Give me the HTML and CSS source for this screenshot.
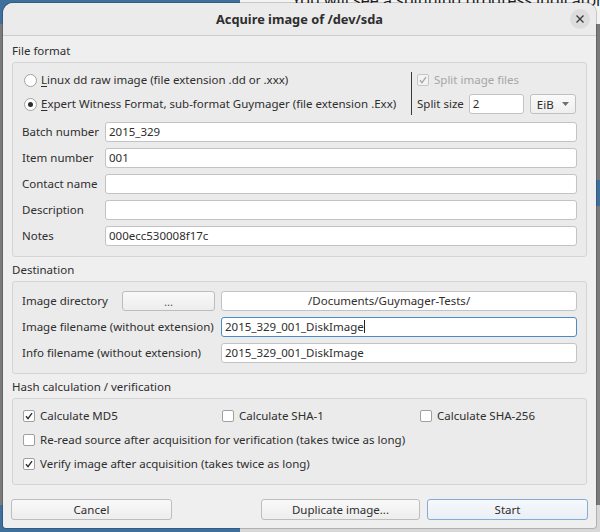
FILE: index.html
```html
<!DOCTYPE html>
<html>
<head>
<meta charset="utf-8">
<link rel="stylesheet" href="styles.css">
</head>
<body>
<div class="desktop">
  <div class="bg-top-left"></div>
  <div class="bg-top-right"><span>You will see a spinning progress indicator appe</span></div>
  <div class="bg-bottom-left"></div>
  <div class="bg-bottom-right"></div>
  <div class="bg-right-hl"></div>

  <div class="dialog">
    <div class="titlebar">
      <span class="title">Acquire image of /dev/sda</span>
      <span class="close"><svg width="10" height="10" viewBox="0 0 10 10"><path d="M1.5 1.5 L8.5 8.5 M8.5 1.5 L1.5 8.5" stroke="#3a3a3a" stroke-width="1.3"/></svg></span>
    </div>
    <div class="dlg-body">
      <div class="section-label first">File format</div>
      <div class="group g-format">
        <div class="format-top">
          <div class="radios">
            <div class="radio-row"><span class="radio"></span><span class="lbl"><u>L</u>inux dd raw image (file extension .dd or .xxx)</span></div>
            <div class="radio-row"><span class="radio checked"></span><span class="lbl"><u>E</u>xpert Witness Format, sub-format Guymager (file extension .Exx)</span></div>
          </div>
          <div class="vsep"></div>
          <div class="split">
            <div class="check-row disabled"><span class="check on"><svg width="10" height="10" viewBox="0 0 10 10"><path d="M2 5.2 L4 7.6 L8 2.2" fill="none" stroke="#a8a8a8" stroke-width="1.4"/></svg></span><span class="lbl">Split image files</span></div>
            <div class="split-size"><span class="lbl">Split size</span><span class="field small">2</span><span class="combo"><span>EiB</span><svg width="7" height="4" viewBox="0 0 7 4"><path d="M0 0 L7 0 L3.5 4 Z" fill="#707070"/></svg></span></div>
          </div>
        </div>
        <div class="form-grid">
          <span class="lbl">Batch number</span><span class="field">2015_329</span>
          <span class="lbl">Item number</span><span class="field">001</span>
          <span class="lbl">Contact name</span><span class="field"></span>
          <span class="lbl">Description</span><span class="field"></span>
          <span class="lbl">Notes</span><span class="field">000ecc530008f17c</span>
        </div>
      </div>

      <div class="section-label">Destination</div>
      <div class="group g-dest">
        <div class="dest-grid">
          <div class="dir-cell"><span class="lbl dir-lbl">Image directory</span><span class="btn small-btn">...</span></div>
          <span class="field dir-field">/Documents/Guymager-Tests/</span>
          <span class="lbl">Image filename (without extension)</span>
          <span class="field focused">2015_329_001_DiskImage<span class="caret"></span></span>
          <span class="lbl">Info filename (without extension)</span>
          <span class="field">2015_329_001_DiskImage</span>
        </div>
      </div>

      <div class="section-label">Hash calculation / verification</div>
      <div class="group g-hash">
        <div class="hash-row three">
          <div class="check-row"><span class="check on"><svg width="10" height="10" viewBox="0 0 10 10"><path d="M2 5.2 L4 7.6 L8 2.2" fill="none" stroke="#2e2e2e" stroke-width="1.4"/></svg></span><span class="lbl">Calculate MD5</span></div>
          <div class="check-row"><span class="check"></span><span class="lbl">Calculate SHA-1</span></div>
          <div class="check-row"><span class="check"></span><span class="lbl">Calculate SHA-256</span></div>
        </div>
        <div class="hash-row">
          <div class="check-row"><span class="check"></span><span class="lbl">Re-read source after acquisition for verification (takes twice as long)</span></div>
        </div>
        <div class="hash-row">
          <div class="check-row"><span class="check on"><svg width="10" height="10" viewBox="0 0 10 10"><path d="M2 5.2 L4 7.6 L8 2.2" fill="none" stroke="#2e2e2e" stroke-width="1.4"/></svg></span><span class="lbl">Verify image after acquisition (takes twice as long)</span></div>
        </div>
      </div>

      <div class="buttons">
        <span class="btn cancel">Cancel</span>
        <span class="spacer"></span>
        <span class="btn dup">Duplicate image...</span>
        <span class="btn start">Start</span>
      </div>
    </div>
  </div>
</div>
</body>
</html>
```

FILE: styles.css
```css
* { box-sizing: border-box; }
html, body { margin: 0; padding: 0; }
body {
  width: 600px;
  height: 532px;
  overflow: hidden;
  background: #7a7a7a;
  font-family: "Noto Sans", "DejaVu Sans", sans-serif;
  font-size: 11.5px;
  color: #2e2e2e;
}
.desktop { position: relative; width: 600px; height: 532px; }

.bg-top-left { position: absolute; left: 0; top: 0; width: 240px; height: 24px; background: #3f6f9d; }
.bg-top-right { position: absolute; left: 240px; right: 0; top: 0; height: 24px; background: #f3f3f3; overflow: hidden; }
.bg-top-right span { position: absolute; left: 52px; top: -11px; font-size: 16px; color: #1e1e1e; white-space: nowrap; }
.bg-bottom-left { position: absolute; left: 0; top: 505px; width: 240px; height: 27px; background: #3f6f9d; }
.bg-bottom-right { position: absolute; left: 240px; right: 0; top: 505px; height: 27px; background: #d8d8d8; }
.bg-right-hl { position: absolute; left: 594px; width: 6px; top: 180px; height: 26px; background: #3f6f9d; }

.dialog {
  position: absolute;
  left: 3px;
  top: 3px;
  width: 593px;
  height: 525px;
  background: #efefef;
  border-radius: 10px 10px 3px 3px;
  box-shadow: 0 0 0 1px rgba(0,0,0,0.18);
  display: flex;
  flex-direction: column;
}
.titlebar {
  height: 33px;
  border-bottom: 1px solid #cdcdcd;
  display: flex;
  align-items: center;
  justify-content: center;
  position: relative;
  background: #ebebeb;
  border-radius: 10px 10px 0 0;
}
.title { font-weight: bold; font-size: 12.8px; color: #2e2e2e; }
.close {
  position: absolute;
  right: 6px;
  top: 6px;
  width: 20px;
  height: 20px;
  border-radius: 50%;
  background: #dcdcdc;
  display: flex;
  align-items: center;
  justify-content: center;
}

.dlg-body { padding: 0 9px 8px 9px; display: flex; flex-direction: column; flex: 1; }
.section-label { height: 16px; line-height: 16px; margin: 5px 0 3px 0; padding-left: 0; }
.section-label.first { margin-top: 7px; }

.group {
  background: #ebebeb;
  border: 1px solid #d4d4d4;
  border-radius: 3px;
  padding: 0 9px 0 9px;
}
.g-format { padding-top: 5px; padding-bottom: 10px; }
.g-dest { padding-top: 9px; padding-bottom: 10px; }
.g-hash { padding-top: 5px; padding-bottom: 8px; }

.lbl { white-space: nowrap; line-height: 20px; }

.format-top { display: flex; height: 48px; }
.radios { width: 389px; display: flex; flex-direction: column; }
.radio-row { height: 24px; display: flex; align-items: center; padding-left: 2px; }
.radio {
  width: 13px; height: 13px; border-radius: 50%;
  border: 1px solid #a3a3a3; background: #fff;
  margin-right: 4px; position: relative; flex: none;
}
.radio.checked::after {
  content: ""; position: absolute; left: 3px; top: 3px;
  width: 5px; height: 5px; border-radius: 50%; background: #2e2e2e;
}
u { text-decoration-thickness: 1px; text-underline-offset: 2px; }

.vsep { width: 1px; background: #3a3a3a; margin-top: 4px; height: 43px; }
.split { margin-left: 5px; display: flex; flex-direction: column; }
.check-row { height: 24px; display: flex; align-items: center; }
.check {
  width: 12px; height: 12px; border: 1px solid #a0a0a0; background: #fff;
  border-radius: 2px; margin-right: 5px; flex: none;
  display: flex; align-items: center; justify-content: center;
}
.check-row.disabled .check { border-color: #c6c6c6; background: #f3f3f3; }
.check-row.disabled .lbl { color: #a6a6a6; }
.split-size { height: 24px; display: flex; align-items: center; }
.split-size .lbl { margin-right: 5px; }

.field {
  height: 20px;
  background: #fff;
  border: 1px solid #c3c3c3;
  border-radius: 3px;
  line-height: 18px;
  padding-left: 3px;
  white-space: nowrap;
  overflow: hidden;
  display: block;
}
.field.small { width: 55px; }
.field.focused { border-color: #4a8bc9; }
.caret { display: inline-block; width: 1px; height: 13px; background: #222; vertical-align: -2px; }
.combo {
  width: 46px; height: 20px; margin-left: 6px;
  border: 1px solid #c0c0c0; border-radius: 3px;
  background: linear-gradient(#fafafa, #efefef);
  display: flex; align-items: center; justify-content: space-between;
  padding: 0 6px 0 6px;
}

.form-grid {
  margin-top: 6px;
  display: grid;
  grid-template-columns: 83px 1fr;
  row-gap: 6px;
}

.dest-grid {
  display: grid;
  grid-template-columns: 199px 1fr;
  row-gap: 6px;
}
.dir-cell { display: flex; }
.dir-lbl { width: 100px; }
.btn {
  height: 20px;
  border: 1px solid #bdbdbd;
  border-radius: 3px;
  background: linear-gradient(#f9f9f9, #ededed);
  display: flex; align-items: center; justify-content: center;
  white-space: nowrap;
}
.small-btn { width: 93px; color: #555; }
.dir-field { padding-left: 86px; }

.hash-row { height: 24px; display: flex; }
.hash-row .check-row { padding-left: 1px; }
.hash-row.three { display: grid; grid-template-columns: 199px 198px 1fr; }

.buttons { margin-top: auto; display: flex; height: 21px; margin-left: -1px; margin-right: -1px; }
.buttons .btn { height: 21px; }
.cancel { width: 161px; }
.spacer { flex: 1; }
.dup { width: 159px; margin-right: 7px; }
.start { width: 161px; border-color: #86acd6; background: linear-gradient(#f6f9fc, #e9eff6); }
```
